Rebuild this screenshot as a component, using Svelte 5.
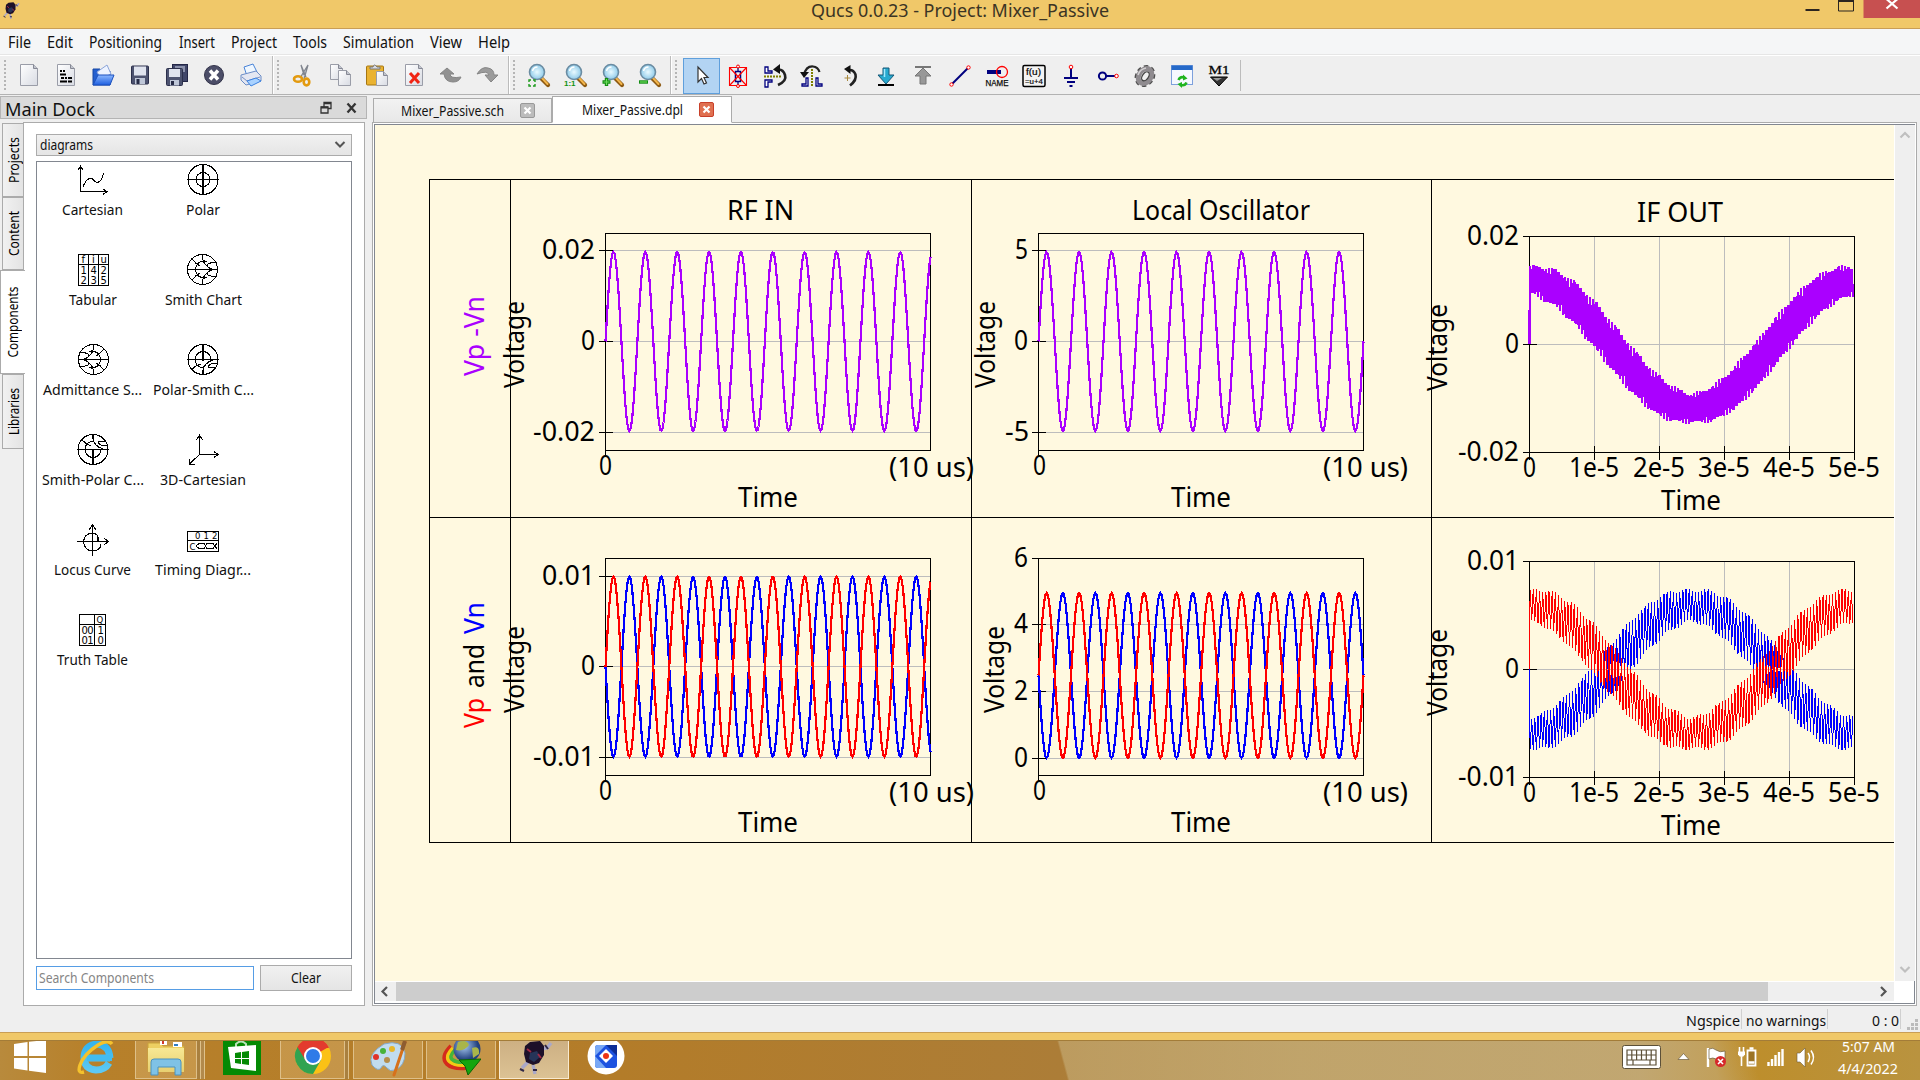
<script>
  const menus = [
    ['File', 23, 8], ['Edit', 26, 16], ['Positioning', 73, 16], ['Insert', 36, 17], ['Project', 46, 16],
    ['Tools', 34, 16], ['Simulation', 71, 16], ['View', 32, 16], ['Help', 32, 16]
  ];
  const groups = [
    { lead: 0, items: ['new', 'text', 'open', 'save', 'saveall', 'closedoc', 'print'] },
    { lead: 1, items: ['cut', 'copy', 'paste', 'delete', 'undo', 'redo'] },
    { lead: 2, items: ['zfit', 'zone', 'zin', 'zout'] },
    { lead: 3, items: ['select', 'deact', 'mirx', 'miry', 'rotate', 'into', 'pop', 'wire', 'name', 'eqn', 'ground', 'port', 'gear', 'view', 'marker'] }
  ];
  const sideTabs = [
    { t: 'Projects', h: 74, w: 46 }, { t: 'Content', h: 73, w: 45 },
    { t: 'Components', h: 104, w: 71, on: true }, { t: 'Libraries', h: 75, w: 47 }
  ];
  const diagrams = [
    ['Cartesian', 61], ['Polar', 34], ['Tabular', 48], ['Smith Chart', 77], ['Admittance S...', 99], ['Polar-Smith C...', 101],
    ['Smith-Polar C...', 102], ['3D-Cartesian', 86], ['Locus Curve', 77], ['Timing Diagr...', 96], ['Truth Table', 71]
  ];
  const tasks = ['explorer', 'store', 'chrome', 'paint', 'idm', 'qucs', 'quartz'];

  function sine(x0, x1, cy, amp, period) {
    let d = '';
    for (let x = x0; x <= x1 + 0.01; x += 1) {
      const y = cy - amp * Math.sin((2 * Math.PI * (x - x0)) / period);
      d += (d ? 'L' : 'M') + x.toFixed(1) + ' ' + y.toFixed(1);
    }
    return d;
  }
  function mixed(cy, sign, base, gain) {
    const x0 = 1529.5;
    let d = `M${x0} ${cy}`;
    let up = true;
    for (let x = x0 + 0.6; x <= 1854.5; x += 1.575) {
      const ph = (2 * Math.PI * (x - 1529.5)) / 325;
      const ripple = base + gain * Math.abs(Math.sin(ph)) + 1.8 * Math.sin(x * 2.3);
      const y = cy - sign * (63.5 * Math.cos(ph) + (up ? ripple : -ripple));
      d += `L${x.toFixed(1)} ${y.toFixed(1)}`;
      up = !up;
    }
    return d;
  }

  const PURPLE = '#aa00ff';
  const eTicks = [
    ['0', 1523, 13, 1529.5], ['1e-5', 1569, 50, 1594.5], ['2e-5', 1633, 52, 1659.5],
    ['3e-5', 1698, 52, 1724.5], ['4e-5', 1763, 52, 1789.5], ['5e-5', 1828, 52, 1854.5]
  ];
  const charts = [
    { x: 605.5, y: 233.5, w: 325, h: 217, ys: [['0.02', 542, 53, 250.5], ['0', 581, 14, 341.5], ['-0.02', 533, 62, 432.5]],
      xs: [['0', 599, 13, 605.5]], unit: 889, time: [738, 507], vx: 524, vy: 388,
      lines: [[sine(605.5, 930.5, 341.5, 89.5, 31.87), PURPLE, 2.2]] },
    { x: 1038.5, y: 233.5, w: 325, h: 217, ys: [['5', 1015, 13, 250.5], ['0', 1014, 14, 341.5], ['-5', 1005, 24, 432.5]],
      xs: [['0', 1033, 13, 1038.5]], unit: 1323, time: [1171, 507], vx: 995, vy: 388,
      lines: [[sine(1038.5, 1363.5, 341.5, 89.5, 32.5), PURPLE, 2.2]] },
    { x: 1529.5, y: 236.5, w: 325, h: 216, big: true, ys: [['0.02', 1467, 52, 236.5], ['0', 1505, 14, 344.5], ['-0.02', 1458, 61, 452.5]],
      xs: eTicks, time: [1661, 510], vx: 1447, vy: 391, lines: [[mixed(344.5, 1, 13.5, 10), PURPLE, 2.5]] },
    { x: 605.5, y: 558.5, w: 325, h: 217, ys: [['0.01', 542, 53, 576.5], ['0', 581, 14, 666.5], ['-0.01', 533, 62, 757.5]],
      xs: [['0', 599, 13, 605.5]], unit: 889, time: [738, 832], vx: 524, vy: 713,
      lines: [[sine(605.5, 930.5, 666.8, -90, 31.87), '#0000ff', 2.2], [sine(605.5, 930.5, 666.8, 90, 31.87), '#ff0000', 2.2]] },
    { x: 1038.5, y: 558.5, w: 325, h: 217, ys: [['6', 1014, 14, 558.5], ['4', 1014, 14, 624.5], ['2', 1014, 14, 691.5], ['0', 1014, 14, 758.5]],
      xs: [['0', 1033, 13, 1038.5]], unit: 1323, time: [1171, 832], vx: 1003.5, vy: 713,
      lines: [[sine(1038.5, 1363.5, 675.5, -82.5, 32.5), '#0000ff', 2.2], [sine(1038.5, 1363.5, 675.5, 82.5, 32.5), '#ff0000', 2.2]] },
    { x: 1529.5, y: 561.5, w: 325, h: 216, big: true, ys: [['0.01', 1467, 52, 561.5], ['0', 1505, 14, 669.5], ['-0.01', 1458, 61, 777.5]],
      xs: eTicks, time: [1661, 835], vx: 1447, vy: 716,
      lines: [[mixed(669.5, -1, 15, 10), '#0000ff', 1], [mixed(669.5, 1, 15, 10), '#ff0000', 1]] }
  ];
</script>

<svelte:head><title>Qucs 0.0.23 - Project: Mixer_Passive</title></svelte:head>

{#snippet label(t, w, h, base, size)}
  <svg class="label" width={w} height={h}><text x="0" y={base} font-size={size} textLength={w} lengthAdjust="spacingAndGlyphs">{t}</text></svg>
{/snippet}

{#snippet bug()}
  <g fill="none" stroke="#aaa8c8" stroke-width="3.4"><path d="M5 28L11 22M18 34L16 25M24 9L30 8L34 3M8 9L11 11" /></g>
  <path d="M8 6L13 2L23 1L27 6L27 15L22 23L16 25L9 22L7 14Z" fill="#1d1029" />
  <path d="M13 13L20 11L23 17L17 22L12 19Z" fill="#263458" />
  <path d="M21 14L24 18M10 9L14 12" stroke="#a02945" stroke-width="2" />
  <path d="M3 29L7 31M16 30L20 30M28 5L31 9" stroke="#302848" stroke-width="2" />
{/snippet}

{#snippet sheet(x, y, w, h)}
  <path d="M{x} {y}h{w - 4}l4 4v{h - 4}h-{w}z" fill="url(#paper)" stroke="#9a9da8" />
  <path d="M{x + w - 4} {y}v4h4" fill="#c2c5ce" stroke="#868995" />
{/snippet}

{#snippet lens()}
  <path d="M14 15L21 22" stroke="#8d5a12" stroke-width="4.2" stroke-linecap="round" />
  <path d="M15 15L20.5 21" stroke="#f3b64c" stroke-width="2" stroke-linecap="round" />
  <circle cx="10" cy="9" r="7.5" fill="url(#glass)" stroke="#6b8ca2" stroke-width="1.6" />
  <path d="M5.5 8q1-4 5-4" fill="none" stroke="#fff" stroke-width="1.5" />
{/snippet}

{#snippet toolIcon(k)}
  <svg width="24" height="24" viewBox="0 0 24 24">
    {#if k === 'new'}{@render sheet(3.5, 1.5, 17, 21)}
    {:else if k === 'text'}{@render sheet(3.5, 1.5, 17, 21)}
      <path d="M6 8h2M9 8h2M6 11.5h6M7 15h3M11 15h2M14 15h4M6 18.500h7M14 18.500h4" stroke="#000" stroke-width="2" />
    {:else if k === 'open'}
      <path d="M2 6h7l2 2h8v14H2z" fill="#2560d0" stroke="#1747a2" />
      <path d="M6 9L16 2L20 11L10 16z" fill="#edf3ff" stroke="#8ba4d8" />
      <path d="M2 22L7 12H23L19 22z" fill="url(#blue)" stroke="#1c51bd" />
    {:else if k === 'save'}
      <rect x="3.500" y="3" width="17" height="18" rx="1" fill="#4d5370" stroke="#2c304c" />
      <rect x="6" y="3.500" width="12" height="9" fill="#dfe3ee" /><rect x="7" y="15" width="10" height="6" fill="#bfc7d8" /><rect x="8.500" y="16" width="3" height="5" fill="#272c47" />
    {:else if k === 'saveall'}
      <rect x="7.500" y="1.500" width="15" height="17" fill="#41476a" stroke="#242747" /><rect x="10" y="3" width="10" height="6" fill="#8c92ac" />
      <rect x="1.500" y="5.500" width="16" height="17" rx="1" fill="#4d5370" stroke="#2c304c" />
      <rect x="4" y="6" width="11" height="8" fill="#dfe3ee" /><rect x="5" y="17" width="9" height="5.500" fill="#bfc7d8" /><rect x="6" y="18" width="3" height="4" fill="#272c47" />
    {:else if k === 'closedoc'}
      <circle cx="12" cy="12" r="9.500" fill="#4c4e68" stroke="#33344a" /><path d="M8 7.500L16 16.500M16 7.500L8 16.500" stroke="#fff" stroke-width="3.400" />
    {:else if k === 'print'}
      <path d="M5 4L14 1L18 9L8 13z" fill="#eff7ff" stroke="#4a84d8" /><path d="M2 12L17 8L22 13L22 18L7 22L2 17z" fill="#e4e7f2" stroke="#6b8cc6" />
      <path d="M3 14L8 18L21 14" fill="none" stroke="#7a92c2" /><path d="M8 18L17 15L22 18L12 23z" fill="#a9d2ff" stroke="#3d82e0" />
    {:else if k === 'cut'}
      <path d="M9 15L17 2L13 16M15 14L10 2L13 12" fill="#d7dbe2" stroke="#80858e" stroke-width="1.300" />
      <ellipse cx="7" cy="16" rx="4" ry="2.800" fill="none" stroke="#e39a0f" stroke-width="2.600" /><ellipse cx="15.500" cy="19" rx="2.800" ry="3.400" fill="none" stroke="#e39a0f" stroke-width="2.600" />
    {:else if k === 'copy'}{@render sheet(2.5, 1.5, 12, 15)}{@render sheet(10.5, 7.5, 12, 15)}
    {:else if k === 'paste'}
      <rect x="1.500" y="3" width="17" height="19" rx="1" fill="#eab331" stroke="#a67611" /><path d="M5 6V4h3q1-4 4 0h3v2z" fill="#d9dce4" stroke="#777" />{@render sheet(11.5, 8.5, 11, 14)}
    {:else if k === 'delete'}{@render sheet(3.5, 1.5, 17, 21)}<path d="M8 10L17 20M17 10L8 20" stroke="#f02414" stroke-width="3" />
    {:else if k === 'undo'}<path d="M1 11L8 5L15 11H11Q11 16 22 14Q20 19 14 19Q6 19 5 11z" fill="#919191" stroke="#858585" />
    {:else if k === 'redo'}<path d="M1 11Q6 3 12 5Q18 6 18 12H22L15 19L9 12H13Q12 7 1 11z" fill="#9b9b9b" stroke="#858585" />
    {:else if k === 'zfit'}{@render lens()}<path d="M2 19v-2h2M6 17h2v2M2 21v2h2M6 23h2v-2" fill="none" stroke="#1d9b1d" stroke-width="1.400" />
    {:else if k === 'zone'}{@render lens()}<text x="0" y="22.500" font-size="8" font-weight="bold" fill="#129212">1:1</text>
    {:else if k === 'zin'}{@render lens()}<path d="M5.500 15v8M1.500 19h8" stroke="#128d12" stroke-width="3.400" /><path d="M5.500 16v6M2.500 19h6" stroke="#6ddc5d" stroke-width="1.200" />
    {:else if k === 'zout'}{@render lens()}<path d="M1 19h9" stroke="#128d12" stroke-width="3.400" /><path d="M2 19h7" stroke="#6ddc5d" stroke-width="1.200" />
    {:else if k === 'select'}<path d="M8 3V18L11.500 14.500L14 20L16.500 19L14 13.500H18z" fill="#fff" stroke="#333" stroke-width="1.200" />
    {:else if k === 'deact'}
      <path d="M12 1v22" stroke="#00007f" stroke-width="1.300" /><rect x="9.500" y="7.500" width="5" height="10" fill="#efefef" stroke="#00007f" stroke-width="1.500" />
      <path d="M3.500 3.500H20.500V21.500H3.500zL20.500 21.500M20.500 3.500L3.500 21.500" fill="none" stroke="#f00" stroke-width="1.100" /><circle cx="12" cy="2.500" r="1.500" fill="#efefef" stroke="#f00" /><circle cx="12" cy="22" r="1.500" fill="#efefef" stroke="#f00" />
    {:else if k === 'mirx'}
      <path d="M2 3h3v4h4v2H2zM2 16h7v2H5v5H2z" fill="#fff" stroke="#00007f" stroke-width="1.300" /><path d="M1 12.500h18" stroke="#7f7f00" stroke-width="2" stroke-dasharray="2 1" />
      <path d="M15 21Q24 17 22 11Q20 5 15 5.500" fill="none" stroke="#222" stroke-width="2.600" /><path d="M10 5.500L17 0V10z" fill="#111" />
    {:else if k === 'miry'}
      <path d="M8 14v8H2v-2h4v-6zM16 14v8h6v-2h-4v-6z" fill="#fff" stroke="#00007f" stroke-width="1.300" /><path d="M12 5v18" stroke="#7f7f00" stroke-width="2" stroke-dasharray="2 1" />
      <path d="M4 11Q6 2 13 2.500Q18 3 19.500 8" fill="none" stroke="#222" stroke-width="2.200" /><path d="M0 8H9L4 14z" fill="#111" />
    {:else if k === 'rotate'}<path d="M13 21.500Q20 16 18.500 10.500Q16.500 5.500 12 6" fill="none" stroke="#222" stroke-width="2.600" /><path d="M7 5L13.500 1V10z" fill="#111" /><path d="M10.500 11v6M7.500 14h6" stroke="#a98a40" />
    {:else if k === 'into'}<path d="M9 4h6v7h5l-8 9l-8-9h5z" fill="#28a9cf" stroke="#155878" /><path d="M10.500 5v8" stroke="#a4eaff" stroke-width="1.500" /><path d="M4 21h16" stroke="#000" stroke-width="2" />
    {:else if k === 'pop'}<path d="M9 20h6v-8h5l-8-8l-8 8h5z" fill="#989898" stroke="#777" /><path d="M4 3h16" stroke="#777" stroke-width="2" />
    {:else if k === 'wire'}<path d="M4 20L20 4" stroke="#00007f" stroke-width="2" /><circle cx="3.500" cy="20.500" r="1.700" fill="#fff" stroke="#f00" /><circle cx="20.500" cy="3.500" r="1.700" fill="#fff" stroke="#f00" />
    {:else if k === 'name'}<path d="M2 8h14" stroke="#00007f" stroke-width="4" /><circle cx="17" cy="8" r="5.500" fill="none" stroke="#f00" stroke-width="1.300" /><text x=".5" y="22" font-size="9" textLength="23" lengthAdjust="spacingAndGlyphs" stroke="#111" stroke-width=".25">NAME</text>
    {:else if k === 'eqn'}<rect x="1" y="1.500" width="22" height="21" rx="1.500" fill="#f3f3f3" stroke="#000" stroke-width="1.500" /><text x="4" y="11" font-size="8.500" textLength="15" lengthAdjust="spacingAndGlyphs" stroke="#111" stroke-width=".2">f(u)</text><text x="3" y="20" font-size="8" textLength="18" lengthAdjust="spacingAndGlyphs" stroke="#111" stroke-width=".2">=u+4</text>
    {:else if k === 'ground'}<path d="M12 4v9M5 14h14M8 18h8M10.500 22h3" stroke="#00007f" stroke-width="2" /><circle cx="12" cy="3" r="1.800" fill="#fff" stroke="#f00" />
    {:else if k === 'port'}<circle cx="6.500" cy="12" r="3.600" fill="none" stroke="#00007f" stroke-width="2" /><path d="M10.500 12h9" stroke="#00007f" stroke-width="2" /><circle cx="20.500" cy="12" r="1.800" fill="#fff" stroke="#f00" />
    {:else if k === 'gear'}
      <g transform="rotate(35 12 12)"><ellipse cx="12" cy="12" rx="8" ry="9.800" fill="none" stroke="#4e4e4e" stroke-width="3.500" stroke-dasharray="4 3" /><ellipse cx="12" cy="12" rx="6" ry="8" fill="none" stroke="#8f8b8f" stroke-width="5" />
      <ellipse cx="12.500" cy="12" rx="3" ry="5" fill="#efefef" stroke="#444" stroke-width="1.300" /></g><path d="M5 11Q7 5 13 4" fill="none" stroke="#d2d0d2" stroke-width="1.600" />
    {:else if k === 'view'}<rect x="1.500" y="1.500" width="21" height="19" fill="#f5f8ff" stroke="#7da0dc" /><rect x="1.500" y="1.500" width="21" height="4.500" fill="#2569c9" /><path d="M8.500 16Q10 12 14 13.500M16.500 18.500Q15 22 11 21" fill="none" stroke="#20b420" stroke-width="2.600" /><path d="M13 10.500v6l4.500-2zM12 24v-6l-4.500 2z" fill="#20b420" />
    {:else}<text x="1.500" y="10" class="serif" font-size="13" textLength="21" lengthAdjust="spacingAndGlyphs" stroke="#111" stroke-width=".3">M1</text><path d="M3.500 13h17L12 22z" fill="#333" stroke="#000" /><path d="M6 14h9l-5 3z" fill="#999" />
    {/if}
  </svg>
{/snippet}

{#snippet smith()}
  <circle cx="15.500" cy="15.500" r="15" /><path d="M.5 15.500h30M15.500 .5v5M15.500 31v-5" /><path d="M20 7.500A8.500 8.500 0 1 0 20 23.500" />
  <path d="M5 5Q9 10 13 12M5 26Q9 21 13 19M15.500 5Q18 13 26 15.500Q18 18 15.500 26M30 9Q20 8 20 12Q22 15.500 30 15.500M30 22Q20 23 20 19Q22 15.500 30 15.500" />
{/snippet}

{#snippet diagramIcon(t)}
  <svg class="dia" width="32" height="32" viewBox="0 0 32 32">
    {#if t === 'Cartesian'}<path d="M3.500 28V2M1 6L3.500 2L6 6M3.500 27.500H30M26 25L30 27.500L26 30.500" /><path d="M6 23Q9 15 13 14.500C17 14 17 18 20 18.500Q25 18 26.500 9" />
    {:else if t === 'Polar'}<circle cx="16" cy="15.500" r="15" /><circle cx="16" cy="15.500" r="7" /><path d="M16 .5v30M1 15.500h30" />
    {:else if t === 'Tabular'}<path d="M1.500 .5h30v31h-30zM1.500 10.500h30M11.500 .5v31M21.500 .5v31" /><g class="glyph"><text x="4.500" y="9">f</text><text x="15" y="9">i</text><text x="23.500" y="9">u</text><text x="3.500" y="20">1</text><text x="13.500" y="20">4</text><text x="23.500" y="20">2</text><text x="3.500" y="30">2</text><text x="13.500" y="30">3</text><text x="23.500" y="30">5</text></g>
    {:else if t === 'Smith Chart'}{@render smith()}
    {:else if t.startsWith('Admittance')}<g transform="translate(32 0) scale(-1 1)">{@render smith()}</g>
    {:else if t.startsWith('Polar-')}<circle cx="16" cy="15.500" r="15" /><path d="M16 .5v16M1 15.500h30M8 15.500a8 8 0 0 1 16 0M8 15.500Q9 24 17 23.500M5 25Q9 21 14 20M16 31V26Q17 19 26 16M31 20Q23 18 21 23Q23 25 29 23" />
    {:else if t.startsWith('Smith-')}<circle cx="16" cy="15.500" r="15" /><path d="M16 15v16M1 15.500h30M8 15.500a8 8 0 0 0 16 0M8 15.500Q9 7 17 7.500M5 6Q9 10 14 12M16 .5V5Q17 12 26 15M31 11Q23 13 21 8Q23 6 29 8" />
    {:else if t === '3D-Cartesian'}<path d="M12.500 20V1M9.500 6L12.500 1L15.500 6M12 20.500H31M27 17.500L31 20.500L27 23.500M12.500 20.500L2.500 30M2.500 25v5.500h5" />
    {:else if t === 'Locus Curve'}<path d="M15.500 32V1M12 6L15.500 1L19 6M0 17.500H31M27 14L31 17.500L27 21M21 17Q22 9 15 9Q7 10 6.500 18Q8 27 16 27Q24 26 24 20" />
    {:else if t.startsWith('Timing')}<path d="M.5 7.500h31v20h-31zM.5 16.500h31" /><g class="glyph small"><text x="8" y="15">0</text><text x="16.500" y="15">1</text><text x="25" y="15">2</text><text x="2.500" y="25.500">C</text></g><path d="M9 22L12 19.500H17L20 24.500H26L30 19.500M9 22L12 24.500H17L20 19.500H26L30 24.500" />
    {:else}<path d="M2.500 .5h26v31h-26zM2.500 10.500h26M17.500 .5v31" /><g class="glyph"><text x="19.500" y="9" class="small">Q</text><text x="4.500" y="20" textLength="12">00</text><text x="20.500" y="20">1</text><text x="4.500" y="29.500" textLength="12">01</text><text x="20.500" y="29.500">0</text></g>
    {/if}
  </svg>
{/snippet}

{#snippet taskIcon(k)}
  <svg width="40" height="37" viewBox="0 0 40 37">
    {#if k === 'explorer'}
      <path d="M2 2h12l3 3h21v25H2z" fill="#edcf62" stroke="#c9a23a" /><path d="M14 0h7v4h-7zM27 1h9v5h-9z" fill="#fff" /><path d="M16 0h2v3h-2z" fill="#d43a2a" /><path d="M28 3h4v2h-4z" fill="#2f7cc2" /><path d="M2 7h36v24H2z" fill="url(#folder)" />
      <path d="M5 34V21Q5 18 8 18H32Q35 18 35 21V34H29V26H12V34z" fill="#7fc2e6" stroke="#4c92bd" />
    {:else if k === 'store'}<rect x="1" width="38" height="34" fill="#058a04" /><path d="M14 6V3Q19 -2 24 3V6" fill="none" stroke="#b9e2b9" stroke-width="2" /><path d="M6 6L34 4V30L9 27z" fill="#fff" /><path d="M13 12l6-1v6h-6zM20 11l7-1v7h-7zM13 18h6v5l-6-1zM20 18h7v6l-7-1z" fill="#058a04" />
    {:else if k === 'chrome'}<circle cx="20" cy="15" r="18" fill="#fbc116" /><path d="M20 15L4.400 6A18 18 0 0 1 35.600 6z" fill="#e33b2e" /><path d="M20 15L4.400 6A18 18 0 0 0 20 33L28 19z" fill="#31a350" /><path d="M4.400 6L13 20L20 7H36Q28 -6 16 -2z" fill="#e33b2e" /><circle cx="20" cy="15" r="9" fill="#fff" /><circle cx="20" cy="15" r="7" fill="#2e7be8" />
    {:else if k === 'paint'}<path d="M16 3Q34 -2 37 12Q37 25 27 29Q22 31 19 27Q15 22 13 27Q10 31 4 24Q-1 13 16 3z" fill="#c1dcef" stroke="#86a9c7" /><circle cx="8" cy="16" r="3" fill="#e0332b" /><circle cx="15" cy="10" r="3" fill="#47b33a" /><circle cx="24" cy="8" r="3" fill="#e8b72a" /><circle cx="19" cy="19" r="3" fill="#b58d4b" /><path d="M37 1L26 34" stroke="#d6711c" stroke-width="3" stroke-linecap="round" /><path d="M37 0L34 9" stroke="#8e5d30" stroke-width="4" />
    {:else if k === 'idm'}
      <g fill="none"><path d="M10 5Q-1 16 6 23Q11 28 25 27" stroke="#d42b1d" stroke-width="4" /><path d="M12 7Q3 16 9 21Q14 25 25 24" stroke="#f4c914" stroke-width="3.500" /><path d="M14 9Q7 16 12 19Q16 22 25 21" stroke="#45b639" stroke-width="3.500" /></g>
      <circle cx="26" cy="8" r="13.500" fill="url(#globe)" /><path d="M17 1Q26 -2 28 4Q23 11 15 9zM31 7Q39 4 38 13L32 17z" fill="#a9b54a" /><path d="M18 19L40 18L27 34L24 25z" fill="#15a50e" stroke="#0a6406" />
    {:else if k === 'qucs'}<g transform="translate(3 -1)">{@render bug()}</g>
    {:else}<ellipse cx="20" cy="15" rx="18.500" ry="18.500" fill="#fff" /><rect x="9" y="4" width="22" height="23" rx="3" fill="#1d52e0" /><path d="M9 15V7Q9 4 12 4H20L9 15zM9 15L20 27H12Q9 27 9 24z" fill="#79a8f5" /><path d="M20 4H31V15z" fill="#0b2c96" /><path d="M20 8L27 15L20 22L13 15z" fill="#fff" /><circle cx="20" cy="15" r="3" fill="#ed3516" />
    {/if}
  </svg>
{/snippet}

<svg class="defs" width="0" height="0">
  <defs>
    <linearGradient id="paper" x1="0" y1="0" x2="1" y2="1"><stop offset="0" stop-color="#fff" /><stop offset="1" stop-color="#d8dbe3" /></linearGradient>
    <linearGradient id="blue" x1="0" y1="0" x2="0" y2="1"><stop offset="0" stop-color="#8cb8ff" /><stop offset="1" stop-color="#1e5fe0" /></linearGradient>
    <radialGradient id="glass"><stop offset="0" stop-color="#e9faff" /><stop offset="1" stop-color="#8fcbea" /></radialGradient>
    <linearGradient id="folder" x1="0" y1="0" x2="0" y2="1"><stop offset="0" stop-color="#f7e894" /><stop offset="1" stop-color="#e8d070" /></linearGradient>
    <radialGradient id="globe" cx=".4" cy=".4"><stop offset="0" stop-color="#a7c9f0" /><stop offset="1" stop-color="#23417f" /></radialGradient>
    <linearGradient id="ie" x1="0" y1="0" x2="0" y2="1"><stop offset="0" stop-color="#35b4ef" /><stop offset="1" stop-color="#5cc8f3" /></linearGradient>
  </defs>
</svg>

<div class="screen">
  <header class="title">
    <svg class="app" width="18" height="20" viewBox="0 0 36 37">{@render bug()}</svg>
    <div class="caption">{@render label('Qucs 0.0.23 - Project: Mixer_Passive', 298, 28, 17, 18.5)}</div>
    <div class="winbtns">
      <svg width="114" height="18" viewBox="0 0 114 18">
        <path d="M0 9h14v2H0z" fill="#2b2520" /><path d="M33 0h15v11H33z" fill="none" stroke="#2b2520" /><path d="M33 0h15v2H33z" fill="#2b2520" />
        <rect x="58" width="57" height="18" fill="#c75050" /><path d="M81 -1L92 8.500M92 -1L81 8.500" stroke="#fff" stroke-width="2.200" />
      </svg>
    </div>
  </header>

  <nav class="menu">
    {#each menus as [t, w, gap]}
      <span class="mi" style="padding-left:{gap}px">{@render label(t, w, 25, 19, 15.5)}</span>
    {/each}
  </nav>

  <div class="toolbar">
    {#each groups as g}
      <div class="group g{g.lead}">
        <i class="grip"></i>
        {#each g.items as k}<button class="tool" class:active={k === 'select'} aria-label={k}>{@render toolIcon(k)}</button>{/each}
      </div>
    {/each}
  </div>

  <main>
    <aside>
      <div class="dockhead">
        {@render label('Main Dock', 90, 21, 19, 18)}
        <svg width="38" height="14" viewBox="0 0 38 14"><path d="M4 1.500h7v6H4zM4 2.500h7" fill="none" stroke="#333" stroke-width="1.300" /><path d="M1 6h7v6H1z" fill="#dadada" stroke="#333" stroke-width="1.300" /><path d="M1 6.500h7" stroke="#333" stroke-width="2" /><path d="M27.500 2.500L35.500 11.500M35.500 2.500L27.500 11.500" stroke="#333" stroke-width="2.300" /></svg>
      </div>
      <div class="dock">
        <div class="sides">
          {#each sideTabs as s}
            <div class="side {s.t.toLowerCase()}" class:on={s.on}>
              <svg width="21" height={s.h - 2}><text transform="translate({s.on ? 17 : 15.500} {(s.h - 2 + s.w) / 2}) rotate(-90)" font-size="14" textLength={s.w} lengthAdjust="spacingAndGlyphs">{s.t}</text></svg>
            </div>
          {/each}
        </div>
        <section class="page">
          <div class="combo">{@render label('diagrams', 53, 20, 15, 14)}<svg width="12" height="8"><path d="M1.500 1L6 5.500L10.500 1" fill="none" stroke="#555" stroke-width="2" /></svg></div>
          <div class="list">
            {#each diagrams as [t, w]}
              <div class="cell">{@render diagramIcon(t)}{@render label(t, w, 22, 19, 15.2)}</div>
            {/each}
          </div>
          <div class="find"><div class="search">{@render label('Search Components', 115, 22, 16, 13.5)}</div><button class="clear">{@render label('Clear', 30, 24, 17, 13.5)}</button></div>
        </section>
      </div>
    </aside>

    <section class="work">
      <div class="tabs">
        <div class="tab">{@render label('Mixer_Passive.sch', 103, 24, 16.5, 13.5)}<svg width="15" height="15"><rect x=".5" y=".5" width="14" height="14" rx="1.500" fill="#bcbcbc" stroke="#999" /><path d="M4.500 4.500L10.500 10.500M10.500 4.500L4.500 10.500" stroke="#fff" stroke-width="2.200" /></svg></div>
        <div class="tab cur">{@render label('Mixer_Passive.dpl', 101, 24, 17, 13.5)}<svg width="15" height="15"><rect x=".5" y=".5" width="14" height="14" rx="1.500" fill="#e07050" stroke="#c8402a" /><path d="M4.500 4.500L10.500 10.500M10.500 4.500L4.500 10.500" stroke="#fff" stroke-width="2.200" /></svg></div>
      </div>
      <div class="frame"><div class="inner">
        <svg class="canvas" width="1519" height="856" viewBox="375 125 1519 856">
          <path class="rule" d="M1894 179.500H429.500V842.500H1894M429.500 517.500H1894M510.500 179.500V842.500M971.500 179.500V842.500M1431.500 179.500V842.500" />
          <text x="727" y="220" textLength="67" lengthAdjust="spacingAndGlyphs">RF IN</text>
          <text x="1132" y="220" textLength="178" lengthAdjust="spacingAndGlyphs">Local Oscillator</text>
          <text x="1637" y="222" textLength="86" lengthAdjust="spacingAndGlyphs">IF OUT</text>
          <text transform="translate(484 376) rotate(-90)" textLength="80" lengthAdjust="spacingAndGlyphs" fill={PURPLE}>Vp -Vn</text>
          <text transform="translate(484 728) rotate(-90)" textLength="30" lengthAdjust="spacingAndGlyphs" fill="#f00">Vp</text>
          <text transform="translate(484 688) rotate(-90)" textLength="44" lengthAdjust="spacingAndGlyphs">and</text>
          <text transform="translate(484 634) rotate(-90)" textLength="32" lengthAdjust="spacingAndGlyphs" fill="#00f">Vn</text>
          {#each charts as c}
            {#each c.ys as y}<path class="grid" d="M{c.x} {y[3]}h{c.w}" />{/each}
            {#if c.big}{#each c.xs as x}<path class="grid" d="M{x[3]} {c.y}v{c.h}" />{/each}{/if}
            <rect class="rule" x={c.x} y={c.y} width={c.w} height={c.h} />
            {#each c.ys as y}
              <path class="rule" d="M{c.x - 7} {y[3]}h{c.big && y[0] !== '0' ? 7 : 14}" />
              <text x={y[1]} y={y[3] + 8} textLength={y[2]} lengthAdjust="spacingAndGlyphs">{y[0]}</text>
            {/each}
            {#each c.xs as x}
              <path class="rule" d="M{x[3]} {c.y + c.h - (c.big ? 7 : 0)}v{c.big ? 14 : 6}" />
              <text x={x[1]} y={c.y + c.h + 24} textLength={x[2]} lengthAdjust="spacingAndGlyphs">{x[0]}</text>
            {/each}
            {#if c.unit}<text x={c.unit} y={c.y + c.h + 26.5} textLength="85" lengthAdjust="spacingAndGlyphs">(10 us)</text>{/if}
            <text x={c.time[0]} y={c.time[1]} textLength="60" lengthAdjust="spacingAndGlyphs">Time</text>
            <text transform="translate({c.vx} {c.vy}) rotate(-90)" textLength="87" lengthAdjust="spacingAndGlyphs">Voltage</text>
            {#each c.lines as [d, color, sw]}<path class="wave" {d} stroke={color} stroke-width={sw} />{/each}
          {/each}
        </svg>
        <div class="vbar">
          <svg width="12" height="10"><path d="M1.500 7.500L6 3L10.500 7.500" fill="none" stroke="#bfbfbf" stroke-width="2.200" /></svg>
          <svg width="12" height="10"><path d="M1.500 2L6 6.500L10.500 2" fill="none" stroke="#bfbfbf" stroke-width="2.200" /></svg>
        </div>
        <div class="hbar">
          <svg width="21" height="19"><path d="M12 5L7.500 9.500L12 14" fill="none" stroke="#555" stroke-width="2.200" /></svg>
          <div class="thumb"></div>
          <svg width="21" height="19"><path d="M8 5L12.500 9.500L8 14" fill="none" stroke="#555" stroke-width="2.200" /></svg>
        </div>
      </div></div>
    </section>
  </main>

  <footer class="status">
    <span class="st">{@render label('Ngspice', 54, 22, 17, 15)}</span>
    <span class="st warn">{@render label('no warnings', 80, 22, 17, 15)}</span>
    <span class="st pos">{@render label('0 : 0', 27, 22, 17, 15)}</span>
    <svg class="size" width="12" height="12"><path d="M8 0h3v3H8zM4 4h3v3H4zM8 4h3v3H8zM0 8h3v3H0zM4 8h3v3H4zM8 8h3v3H8z" fill="#bbb" /></svg>
  </footer>
  <div class="edge"></div>

  <div class="taskbar">
    <svg class="start" width="34" height="32"><path d="M1 3L14.500 1V15H1zM16 .8L33 -1V15H16zM1 17H14.500V29.500L1 27.500zM16 17H33V32L16 29.700z" fill="#fff" /></svg>
    <svg class="iex" width="40" height="34" viewBox="0 0 40 34"><path d="M8 17H34M33 22Q29 29 20 29Q8 28 8 16Q9 4 21 3Q33 4 34 17" fill="none" stroke="url(#ie)" stroke-width="7" /><path d="M11 17H36" stroke="#42bcf0" stroke-width="6" /><path d="M36 3Q32 -2 22 4Q8 13 4 24Q1 33 8 31" fill="none" stroke="#f5c22c" stroke-width="3.400" /></svg>
    {#each tasks as k}<div class="task {k}">{@render taskIcon(k)}</div>{/each}
    <div class="tray">
      <svg width="200" height="38" viewBox="1620 1041 200 38">
        <rect x="1622.500" y="1045.500" width="38" height="23" rx="2" fill="#fff" stroke="#5c5038" />
        <path d="M1627 1050h29v15h-29zM1627 1055h29M1627 1060h29M1631.800 1050v10M1636.600 1050v10M1641.500 1050v10M1646.300 1050v10M1651.200 1050v10M1633 1060v5M1650 1060v5" fill="none" stroke="#5c5038" stroke-width="1.200" />
        <path d="M1678 1059.500L1683.500 1053.500L1689 1059.500z" fill="#fff" stroke="#6b5c3d" stroke-width=".7" />
        <path d="M1708 1048v19" stroke="#fff" stroke-width="2.400" /><path d="M1709 1049Q1713 1047 1716 1050Q1720 1053 1725 1051V1060Q1719 1062 1716 1059Q1713 1057 1709 1059z" fill="#fff" stroke="#6b5c3d" stroke-width=".7" />
        <circle cx="1720.500" cy="1061.500" r="5.500" fill="#d6292b" /><path d="M1718 1059L1723 1064M1723 1059L1718 1064" stroke="#fff" stroke-width="1.600" />
        <path d="M1739.500 1047v5M1743.500 1047v5M1741.500 1057v9" stroke="#fff" stroke-width="1.600" /><path d="M1738 1051.500h7v3q-3.500 5-7 0z" fill="#fff" />
        <path d="M1747.500 1050.500h8v15h-8z" fill="#9c7425" stroke="#fff" stroke-width="1.800" /><path d="M1749.500 1048.500h4M1748.500 1062.500h6" stroke="#fff" stroke-width="2.600" />
        <path d="M1768.500 1066v-4M1772 1066v-7M1775.500 1066v-11M1779 1066v-14M1782.500 1066v-17" stroke="#fff" stroke-width="2.400" />
        <path d="M1797 1053h3l5-5v19l-5-5h-3z" fill="#fff" stroke="#6b5c3d" stroke-width=".6" /><path d="M1808 1053q3 4 0 9M1811 1050.500q5 7 0 14" fill="none" stroke="#fff" stroke-width="1.500" />
      </svg>
      <div class="clock">{@render label('5:07 AM', 53, 17, 11, 15)}{@render label('4/4/2022', 60, 21, 16, 15)}</div>
    </div>
  </div>
</div>

<style>
  :global(body) { margin: 0; overflow: hidden; }
  * { box-sizing: border-box; }
  button { border: 0; background: none; padding: 0; }
  svg { display: block; flex: none; }
  .defs { position: absolute; }
  .screen { width: 1920px; height: 1080px; display: flex; flex-direction: column; background: #efefef; font-family: "Noto Sans", "Open Sans", sans-serif; color: #111; overflow: hidden; }
  .label, .tool svg { overflow: visible; }
  .label { fill: currentColor; }
  .serif { font-family: "Liberation Serif", serif; }

  .title { height: 29px; flex: none; display: grid; grid-template-columns: 811px 298px 1fr; background: #f0c869; border-bottom: 1px solid #c99e56; }
  .app { margin: 1px 0 0 2px; }
  .caption { color: #3b3424; }
  .winbtns { display: flex; justify-content: flex-end; }
  .winbtns svg { width: 115px; }

  .menu { height: 27px; flex: none; display: flex; background: #f5f6f7; border-bottom: 1px solid #fff; box-shadow: inset 0 -1px #e6e6e6; color: #111; }
  .mi { display: block; }

  .toolbar { height: 39px; flex: none; display: flex; border-bottom: 1px solid #b2b2b2; }
  .group { display: flex; align-items: center; border-right: 1px solid #bcbcbc; padding-left: 4px; box-shadow: 1px 0 #fff; }
  .g0 { width: 273px; } .g1 { width: 236px; } .g2 { width: 162px; }
  .g3 { width: 570px; height: 31px; margin-top: 4px; box-shadow: none; }
  .grip { width: 2px; height: 31px; flex: none; margin-right: 4px; background: repeating-linear-gradient(#b5b5b5 0 2px, transparent 2px 4px); }
  .g1 .grip, .g2 .grip { margin-right: 5px; }
  .g3 .grip { margin-right: 6px; }
  .tool { width: 37px; height: 36px; flex: none; display: flex; align-items: center; justify-content: center; }
  .g0 .tool { padding-left: 1px; }
  .g3 .tool:not(.active) { padding-right: 2px; }
  .tool.active { background: #b3d4f3; border: 1px solid #5f9fdc; }

  main { height: 911px; flex: none; display: flex; }
  aside { width: 367px; padding-top: 1px; }
  .dockhead { height: 23px; border: 1px solid #b4b4b4; background: #dadada; display: flex; align-items: center; justify-content: space-between; padding: 0 8px 0 4px; }
  .dock { display: flex; margin-top: 3px; }
  .sides { width: 24px; flex: none; padding-top: 1px; }
  .side { margin-left: 2px; border: 1px solid #ababab; border-right: 0; background: linear-gradient(90deg, #f1f1f1, #e3e3e3); }
  .side.on { margin-left: 0; background: #fff; width: 25px; position: relative; z-index: 1; }
  .projects { height: 74px; } .content { height: 73px; } .components { height: 104px; } .libraries { height: 75px; }
  .page { width: 342px; height: 884px; flex: none; background: #fff; border: 1px solid #ababab; margin-left: -1px; padding: 11px 12px 0 12px; }
  .combo { height: 22px; border: 1px solid #ababab; background: linear-gradient(#f1f1f1, #e5e5e5); display: flex; align-items: center; justify-content: space-between; padding: 0 5px 0 3px; }
  .list { height: 798px; margin-top: 5px; border: 1px solid #828790; padding-top: 2px; display: grid; grid-template-columns: 111px 110px; grid-auto-rows: 90px; align-content: start; }
  .cell { display: flex; flex-direction: column; align-items: center; }
  .dia { fill: none; stroke: #000; stroke-width: 1.1; shape-rendering: crispEdges; }
  .glyph { fill: #000; stroke: none; font-size: 10px; font-family: "DejaVu Sans", sans-serif; }
  .small { font-size: 8.5px; }
  .find { display: flex; margin-top: 6px; gap: 6px; }
  .search { width: 218px; height: 24px; margin-top: 1px; border: 1px solid #569de5; padding-left: 2px; color: #858585; }
  .clear { flex: 1; height: 26px; border: 1px solid #ababab; background: linear-gradient(#f1f1f1, #e5e5e5); display: flex; justify-content: center; padding-right: 1px; font-family: inherit; color: #111; }

  .work { width: 1545px; margin-left: 5px; padding-top: 1px; }
  .tabs { display: flex; align-items: flex-end; height: 27px; padding-left: 1px; margin-bottom: -1px; position: relative; }
  .tab { width: 179px; height: 25px; border: 1px solid #ababab; background: linear-gradient(#f2f2f2, #e8e8e8); display: flex; align-items: center; gap: 16px; padding-left: 27px; }
  .tab.cur { width: 180px; height: 27px; background: #fff; border-bottom-color: #fff; padding-left: 29px; }
  .frame { height: 884px; border: 1px solid #ababab; padding: 1px; background: #fff; }
  .inner { height: 880px; border: 1px solid #828790; display: grid; grid-template-columns: 1519px 21px; grid-template-rows: 857px 21px; background: #fff; }
  .canvas { background: #fff9e0; font-size: 27px; fill: #000; }
  .rule { fill: none; stroke: #000; stroke-width: 1; shape-rendering: crispEdges; }
  .grid { fill: none; stroke: #bdbdbd; stroke-width: 1; shape-rendering: crispEdges; }
  .wave { fill: none; shape-rendering: crispEdges; }
  .vbar { margin-left: 1px; height: 856px; background: #efefef; display: flex; flex-direction: column; justify-content: space-between; align-items: center; padding: 5px 0 6px; }
  .hbar { height: 19px; background: #efefef; display: flex; }
  .thumb { width: 1372px; background: #cdcdcd; margin-right: 105px; }

  .status { height: 26px; flex: none; display: flex; justify-content: flex-end; padding-top: 3px; }
  .st { height: 20px; border-right: 1px solid #d0d0d0; padding-right: 1px; display: block; }
  .warn { padding-left: 4px; } .pos { padding-left: 44px; }
  .size { margin: 10px 1px 0 6px; }
  .edge { height: 9px; flex: none; background: #f0c869; border-top: 1px solid #c99e56; border-bottom: 1px solid #a37c38; }

  .taskbar { height: 39px; flex: none; display: flex; background: linear-gradient(75deg, transparent 0 1031px, rgba(195, 168, 112, .7) 1033px 1660px, transparent 1700px), linear-gradient(90deg, #b88a3c 0, #b7802a 90px, #b37c29 620px, #ac7d37 1060px, #b99a5e 1300px, #bda474 1640px, #be8d28 1720px, #b9933f 1920px); }
  .start { margin: 0 0 0 13px; }
  .iex { margin-left: 29px; }
  .task { height: 38px; display: flex; justify-content: center; border: 1px solid transparent; border-top: 0; flex: none; }
  .explorer, .chrome, .paint, .idm { background: rgba(222, 184, 120, .4); border-color: rgba(235, 214, 170, .65); }
  .explorer { width: 62px; margin-left: 19px; box-shadow: 3px 0 #a9803f, 4px 0 #dec18b, 7px 0 #b28a4c, 8px 0 #dec18b; }
  .store { width: 40px; margin-left: 25px; }
  .chrome { width: 65px; margin-left: 18px; box-shadow: 3px 0 #a9803f, 4px 0 #dec18b; }
  .paint { width: 70px; margin-left: 8px; }
  .idm { width: 70px; margin-left: 3px; }
  .qucs { width: 70px; margin-left: 3px; background: linear-gradient(#cdb083, #dcc294); border-color: #f8ead0; }
  .quartz { width: 40px; margin-left: 17px; }
  .tray { display: flex; flex: 1; justify-content: flex-end; color: #fff; }
  .clock { width: 100px; display: flex; flex-direction: column; align-items: center; padding-right: 4px; }
</style>
